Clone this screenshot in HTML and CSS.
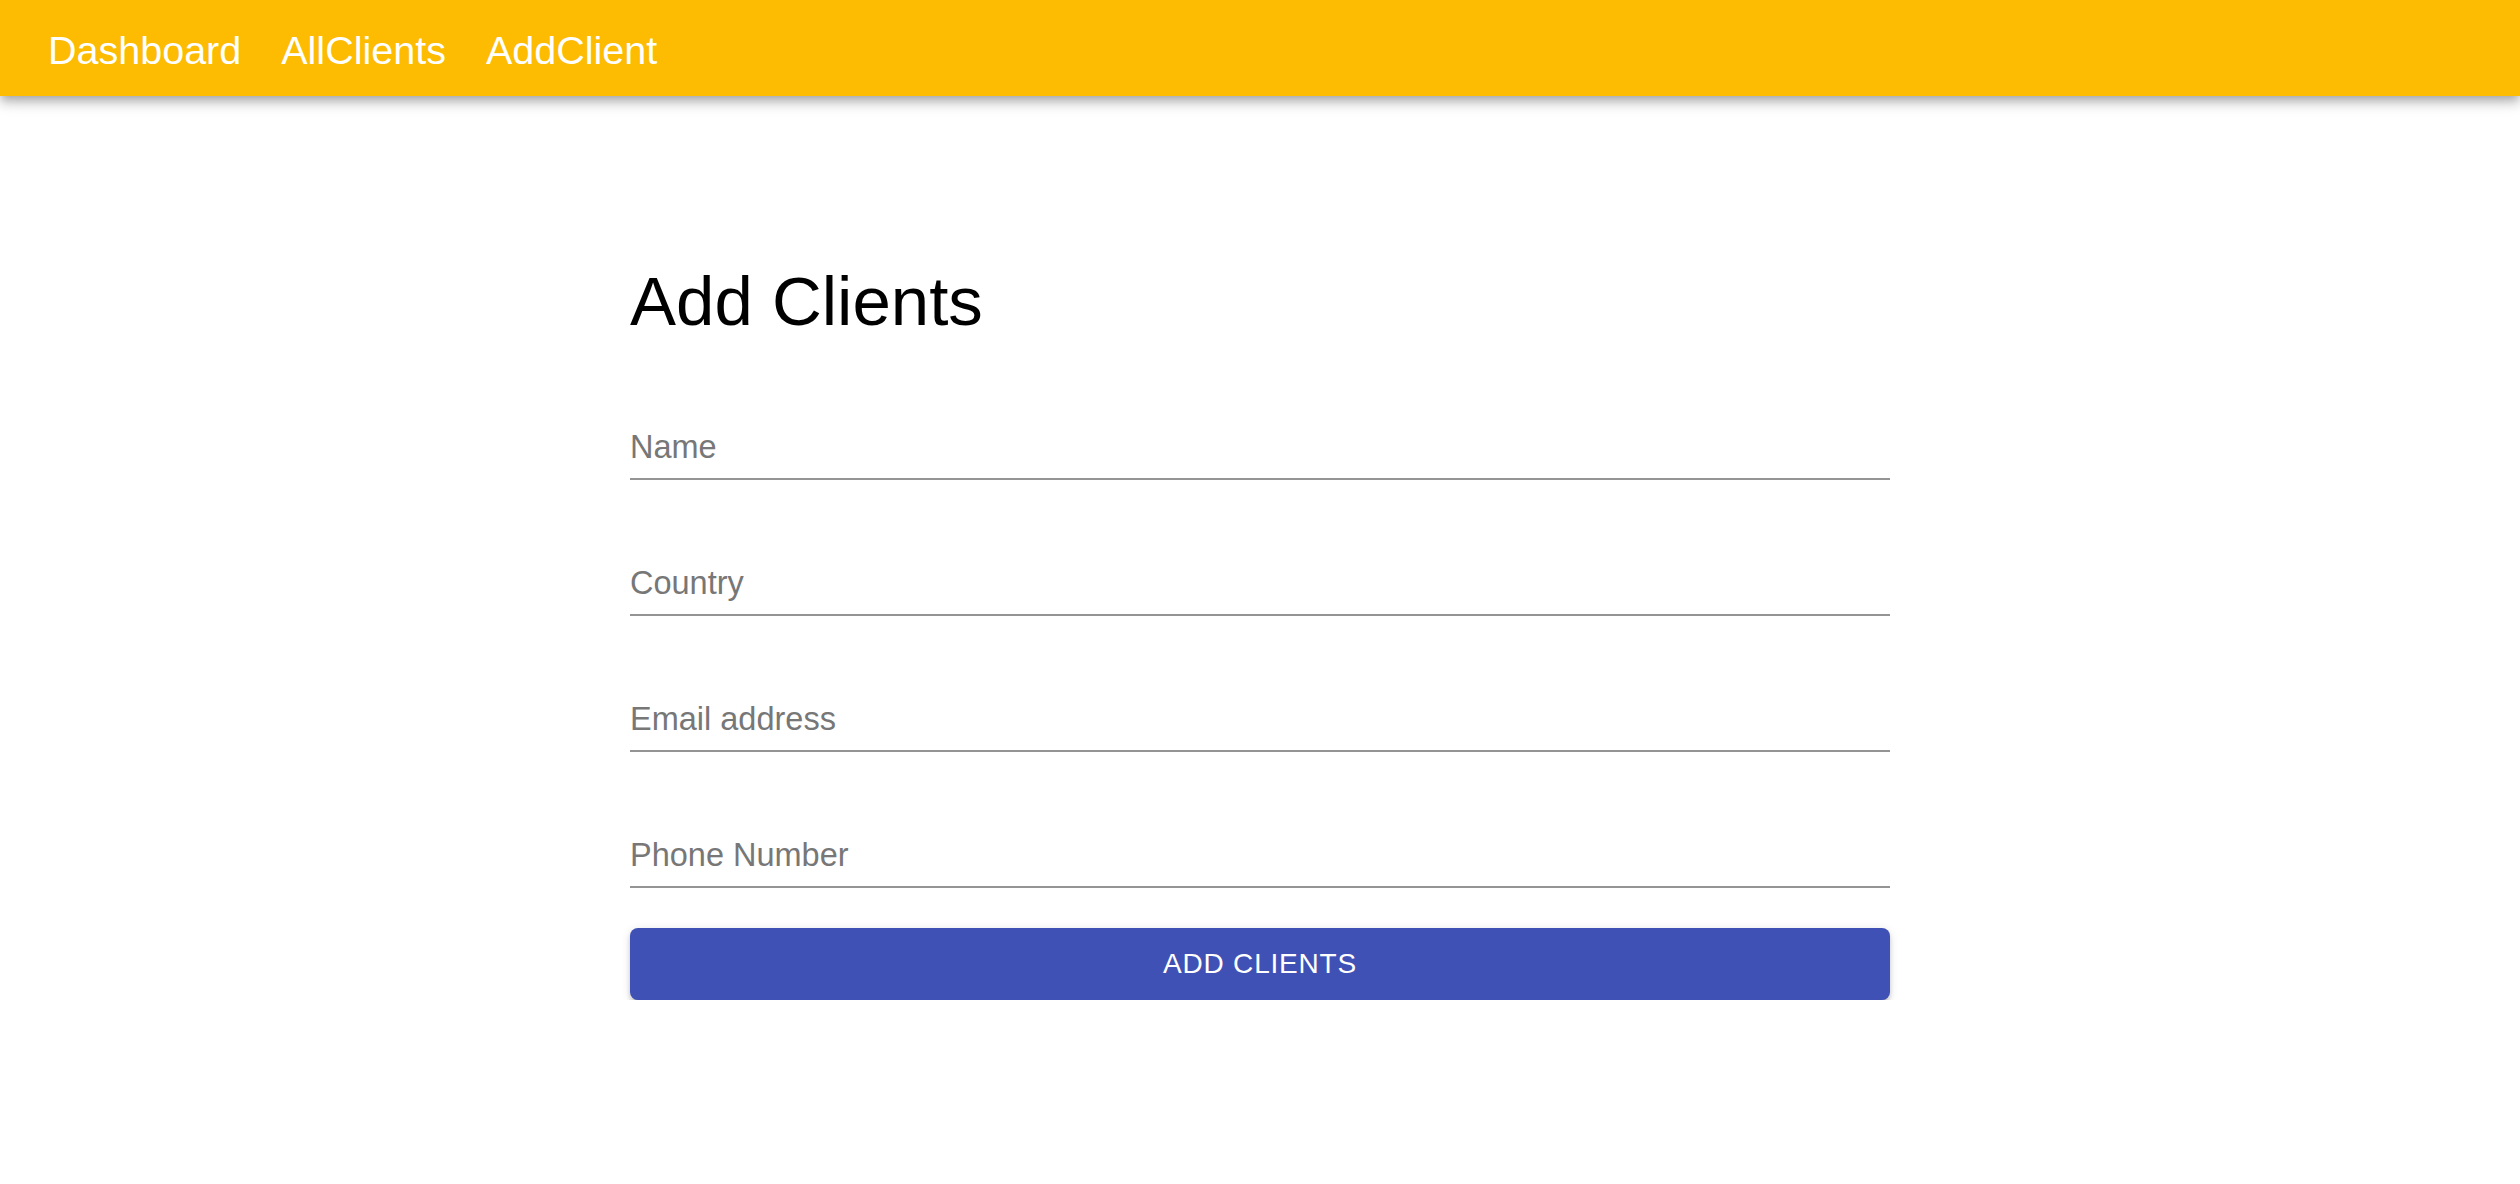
FILE: index.html
```html
<!DOCTYPE html>
<html lang="en">
<head>
<meta charset="utf-8">
<title>Add Clients</title>
<link rel="stylesheet" href="styles.css">
</head>
<body>
<header class="appbar">
  <nav class="nav">
    <a class="nav-link" href="#">Dashboard</a>
    <a class="nav-link" href="#">AllClients</a>
    <a class="nav-link" href="#">AddClient</a>
  </nav>
</header>
<main class="container">
  <h1 class="title">Add Clients</h1>
  <form class="form">
    <div class="field"><input class="input" type="text" placeholder="Name"></div>
    <div class="field"><input class="input" type="text" placeholder="Country"></div>
    <div class="field"><input class="input" type="email" placeholder="Email address"></div>
    <div class="field"><input class="input" type="tel" placeholder="Phone Number"></div>
    <button class="submit" type="button">Add Clients</button>
  </form>
</main>
</body>
</html>
```

FILE: styles.css
```css
html, body {
  margin: 0;
  padding: 0;
  background: #ffffff;
  font-family: "Liberation Sans", Arial, sans-serif;
}

.appbar {
  height: 96px;
  background: #fdbb02;
  box-shadow: 0px 4px 8px -2px rgba(0,0,0,0.2), 0px 8px 10px 0px rgba(0,0,0,0.14), 0px 2px 20px 0px rgba(0,0,0,0.12);
  display: flex;
  align-items: center;
  padding: 4px 48px 0;
  box-sizing: border-box;
  position: relative;
  z-index: 1;
}

.nav {
  display: flex;
  gap: 40px;
}

.nav-link {
  color: #ffffff;
  text-decoration: none;
  font-size: 39.5px;
  line-height: normal;
}

.container {
  width: 1260px;
  margin: 0 auto;
  padding-top: 164px;
}

.title {
  margin: 0;
  font-size: 69px;
  line-height: 84px;
  font-weight: 400;
  color: #000000;
}

.form {
  display: flex;
  flex-direction: column;
}

.field {
  margin-top: 76px;
}

.input {
  display: block;
  width: 100%;
  box-sizing: border-box;
  height: 60px;
  padding: 8px 0 12px;
  border: none;
  border-bottom: 2px solid #949494;
  outline: none;
  background: transparent;
  font-family: "Liberation Sans", Arial, sans-serif;
  font-size: 32.5px;
  color: #212121;
}

.input::placeholder {
  color: #777777;
  opacity: 1;
}

.submit {
  margin-top: 40px;
  height: 72px;
  width: 100%;
  border: none;
  border-radius: 8px;
  background: #3f51b5;
  color: #ffffff;
  font-family: "Liberation Sans", Arial, sans-serif;
  font-size: 28px;
  letter-spacing: 0.8px;
  text-transform: uppercase;
  box-shadow: 0px 6px 2px -4px rgba(0,0,0,0.2), 0px 4px 4px 0px rgba(0,0,0,0.14), 0px 2px 10px 0px rgba(0,0,0,0.12);
  cursor: pointer;
  padding: 0;
}
```
